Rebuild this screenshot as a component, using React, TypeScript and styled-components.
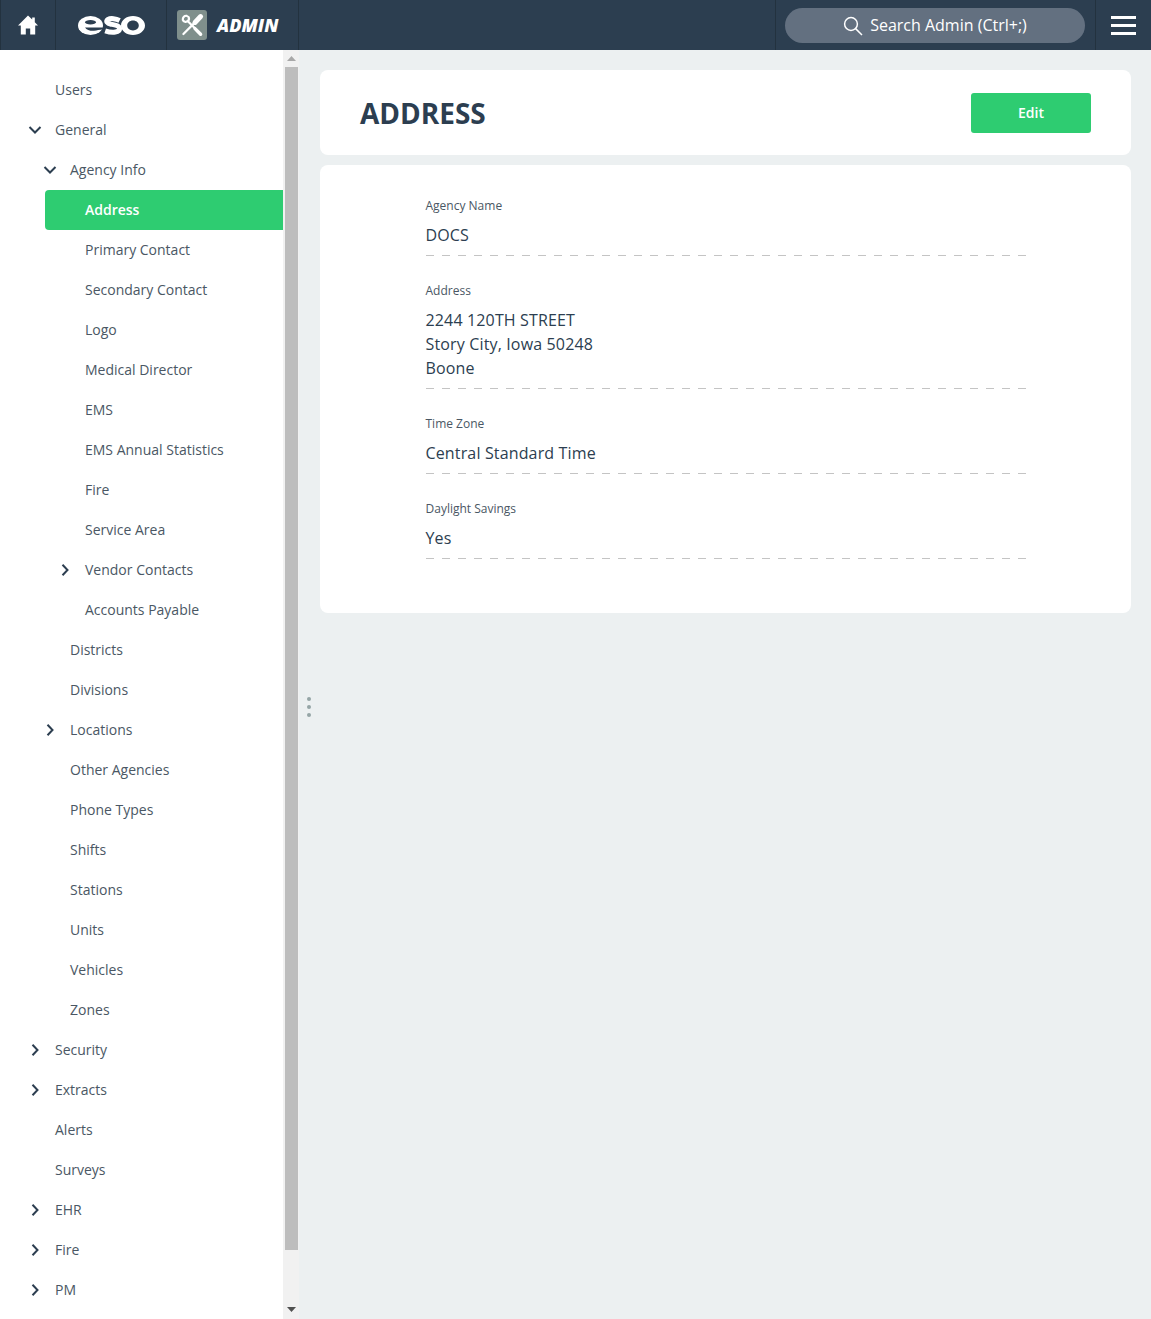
import React from "react";
import styled, { createGlobalStyle } from "styled-components";

const Global = createGlobalStyle`
  html, body { margin: 0; padding: 0; height: 100%; overflow: hidden; }
  body { font-family: "Open Sans", "Liberation Sans", sans-serif; background: #ecf0f1; color: #2c3e50; }
  * { box-sizing: border-box; }
`;

const Page = styled.div`
  width: 1151px;
  height: 1319px;
  display: flex;
  flex-direction: column;
  overflow: hidden;
`;

const TopBar = styled.header`
  height: 50px;
  flex: none;
  display: flex;
  background: #2c3e50;
  color: #fff;
`;

const Cell = styled.div<{ $w?: number; $grow?: boolean }>`
  width: ${(p) => (p.$w ? `${p.$w}px` : "auto")};
  flex: ${(p) => (p.$grow ? "1" : "none")};
  display: flex;
  align-items: center;
  border-left: 1px solid #23323f;
`;

const HomeCell = styled(Cell)`
  justify-content: center;
  padding-right: 1px;
`;

const LogoCell = styled(Cell)`
  justify-content: center;
`;

const AdminCell = styled(Cell)`
  padding-left: 10px;
  gap: 10px;
`;

const Tile = styled.div`
  width: 30px;
  height: 30px;
  border-radius: 3px;
  background: #7f8f8c;
  display: flex;
  align-items: center;
  justify-content: center;
`;

const AdminText = styled.span`
  font-size: 18px;
  font-weight: 800;
  font-style: italic;
  color: #fff;
`;

const SearchCell = styled(Cell)`
  padding: 8px 10px 0 9px;
  align-items: flex-start;
`;

const SearchPill = styled.div`
  width: 300px;
  height: 35px;
  border-radius: 18px;
  background: #637080;
  display: flex;
  align-items: center;
  justify-content: center;
  gap: 7px;
  font-size: 16px;
  color: #fff;
`;

const SearchLabel = styled.span`
  padding-bottom: 2px;
`;

const Burger = styled(Cell)`
  flex-direction: column;
  justify-content: center;
  gap: 5px;
`;

const BurgerBar = styled.span`
  width: 25px;
  height: 3px;
  background: #fff;
`;

const Body = styled.div`
  flex: 1;
  display: flex;
  position: relative;
  min-height: 0;
`;

const Side = styled.nav`
  width: 283px;
  flex: none;
  background: #fff;
  padding-top: 20px;
`;

const Row = styled.div<{ $level: number; $active?: boolean }>`
  height: 40px;
  display: flex;
  align-items: center;
  position: relative;
  margin-left: ${(p) => (p.$active ? 45 : 0)}px;
  padding: 0 0 2px ${(p) => (p.$active ? 40 : 55 + p.$level * 15)}px;
  font-size: 14px;
  font-weight: ${(p) => (p.$active ? 600 : 400)};
  background: ${(p) => (p.$active ? "#2ecc71" : "transparent")};
  color: ${(p) => (p.$active ? "#fff" : "#4a5764")};
  border-radius: ${(p) => (p.$active ? "4px 0 0 4px" : "0")};
`;

const Chevron = styled.svg<{ $level: number }>`
  position: absolute;
  left: ${(p) => 28 + p.$level * 15}px;
  top: 14px;
  width: 14px;
  height: 12px;
  fill: none;
  stroke: #2c3e50;
  stroke-width: 2;
`;

const Track = styled.div`
  width: 16px;
  flex: none;
  background: #f1f1f1;
  display: flex;
  flex-direction: column;
  align-items: center;
`;

const Arrow = styled.svg`
  width: 9px;
  height: 5px;
  flex: none;
`;

const ArrowUp = styled(Arrow)`
  margin: 6px 0 6px;
`;

const ArrowDown = styled(Arrow)`
  margin: 6px 0 7px;
`;

const Thumb = styled.div`
  width: 13px;
  flex: none;
  height: 1183px;
  background: #bdbdbd;
`;

const TrackGap = styled.div`
  flex: 1;
`;

const Main = styled.main`
  flex: 1;
  min-width: 0;
  padding: 20px 20px 0 21px;
  display: flex;
  flex-direction: column;
  gap: 10px;
`;

const Card = styled.section`
  background: #fff;
  border-radius: 8px;
`;

const HeadCard = styled(Card)`
  height: 85px;
  display: flex;
  align-items: center;
  justify-content: space-between;
  padding: 0 40px;
`;

const Title = styled.h1`
  margin: 1px 0 0;
  font-size: 28px;
  font-weight: 700;
  color: #2c3e50;
`;

const EditButton = styled.button`
  width: 120px;
  height: 40px;
  border: 0;
  border-radius: 3px;
  padding: 0 0 2px;
  background: #2ecc71;
  color: #fff;
  font: 600 14px "Open Sans", sans-serif;
  margin-top: 1px;
`;

const FormCard = styled(Card)`
  padding: 30px 105px 54px 105.5px;
`;

const Field = styled.div`
  & + & {
    margin-top: 24px;
  }
`;

const Label = styled.div`
  font-size: 12px;
  line-height: 20px;
  color: #4a5764;
  padding-top: 1px;
  margin-bottom: 7px;
`;

const Value = styled.div`
  font-size: 16px;
  font-weight: 500;
  line-height: 24px;
  letter-spacing: 0.15px;
  color: #2c3e50;
  padding-bottom: 8px;
`;

const Dash = styled.div`
  height: 1px;
  background: repeating-linear-gradient(90deg, #c4c4c4 0 8px, transparent 8px 16px);
`;

const Handle = styled.div`
  position: absolute;
  left: 307px;
  top: 647px;
  display: flex;
  flex-direction: column;
  gap: 4px;
`;

const Dot = styled.span`
  width: 4px;
  height: 4px;
  border-radius: 50%;
  background: #95a5a6;
`;

type Item = { t: string; l: number; c?: "d" | "r"; a?: boolean };

const items: Item[] = [
  { t: "Users", l: 0 },
  { t: "General", l: 0, c: "d" },
  { t: "Agency Info", l: 1, c: "d" },
  { t: "Address", l: 2, a: true },
  { t: "Primary Contact", l: 2 },
  { t: "Secondary Contact", l: 2 },
  { t: "Logo", l: 2 },
  { t: "Medical Director", l: 2 },
  { t: "EMS", l: 2 },
  { t: "EMS Annual Statistics", l: 2 },
  { t: "Fire", l: 2 },
  { t: "Service Area", l: 2 },
  { t: "Vendor Contacts", l: 2, c: "r" },
  { t: "Accounts Payable", l: 2 },
  { t: "Districts", l: 1 },
  { t: "Divisions", l: 1 },
  { t: "Locations", l: 1, c: "r" },
  { t: "Other Agencies", l: 1 },
  { t: "Phone Types", l: 1 },
  { t: "Shifts", l: 1 },
  { t: "Stations", l: 1 },
  { t: "Units", l: 1 },
  { t: "Vehicles", l: 1 },
  { t: "Zones", l: 1 },
  { t: "Security", l: 0, c: "r" },
  { t: "Extracts", l: 0, c: "r" },
  { t: "Alerts", l: 0 },
  { t: "Surveys", l: 0 },
  { t: "EHR", l: 0, c: "r" },
  { t: "Fire", l: 0, c: "r" },
  { t: "PM", l: 0, c: "r" },
];

const fields: { label: string; lines: string[] }[] = [
  { label: "Agency Name", lines: ["DOCS"] },
  { label: "Address", lines: ["2244 120TH STREET", "Story City, Iowa 50248", "Boone"] },
  { label: "Time Zone", lines: ["Central Standard Time"] },
  { label: "Daylight Savings", lines: ["Yes"] },
];

export default function App() {
  return (
    <Page>
      <Global />
      <TopBar>
        <HomeCell $w={55}>
          <svg width="20" height="20" viewBox="0 0 20 20" fill="#fff">
            <path d="M10 0.5 L14.2 4.6 L14.2 2.6 L16.8 2.6 L16.8 7.2 L20 10.4 L17.2 10.4 L17.2 19.5 L12.2 19.5 L12.2 13.5 L7.8 13.5 L7.8 19.5 L2.8 19.5 L2.8 10.4 L0 10.4 Z" />
          </svg>
        </HomeCell>
        <LogoCell $w={111}>
          <svg width="67" height="19" viewBox="0 0 67 19">
            <ellipse cx="12.5" cy="9.5" rx="12.5" ry="9.5" fill="#fff" />
            <ellipse cx="12.5" cy="6.2" rx="5.6" ry="2.2" fill="#2c3e50" />
            <path d="M7 11.4 L25 11.4 L25 13.6 C21 13.8 19 14.6 16 14.8 C12 15 8.5 13.8 7 11.4 Z" fill="#2c3e50" />
            <path d="M41.6 4.4 C38 2.6 32.6 2 30 3.4 C27.4 5 29 7.4 33 8.2 C37 9 41.6 9.6 41.6 12.8 C41.6 16 35 17.4 27.2 14.8" fill="none" stroke="#fff" strokeWidth="5" />
            <path fillRule="evenodd" fill="#fff" d="M55 0 C61.6 0 67 4.2 67 9.5 C67 14.8 61.6 19 55 19 C48.4 19 43 14.8 43 9.5 C43 4.2 48.4 0 55 0 Z M55 4.6 C51.6 4.6 49.2 6.8 49.2 9.5 C49.2 12.2 51.6 14.4 55 14.4 C58.4 14.4 60.8 12.2 60.8 9.5 C60.8 6.8 58.4 4.6 55 4.6 Z" />
          </svg>
        </LogoCell>
        <AdminCell $w={132}>
          <Tile>
            <svg width="30" height="30" viewBox="0 0 30 30" fill="none" stroke="#fff" strokeLinecap="round">
              <path strokeWidth="5" d="M23.6 6.6 L18 12.4" />
              <path strokeWidth="2.2" d="M18 12.4 L6.4 24" />
              <path strokeWidth="2.2" d="M10.6 11 L17.4 17.8" />
              <path strokeWidth="3.4" d="M18 18.6 L23.6 24.2" />
              <path strokeWidth="2.2" d="M9.8 5.8 C7.4 5.4 5.6 7.2 5.8 9.8 C6.6 11.8 9 12.4 10.8 11.2 C12 10 12.2 8 11.4 6.8" />
            </svg>
          </Tile>
          <AdminText>ADMIN</AdminText>
        </AdminCell>
        <Cell $grow />
        <SearchCell $w={320}>
          <SearchPill>
            <svg width="20" height="20" viewBox="0 0 20 20" fill="none" stroke="#fff" strokeWidth="1.5">
              <circle cx="8" cy="8" r="6.4" />
              <path d="M12.6 12.6 L19 19" />
            </svg>
            <SearchLabel>Search Admin (Ctrl+;)</SearchLabel>
          </SearchPill>
        </SearchCell>
        <Burger $w={56}>
          <BurgerBar />
          <BurgerBar />
          <BurgerBar />
        </Burger>
      </TopBar>
      <Body>
        <Side>
          {items.map((it, i) => (
            <Row key={i} $level={it.l} $active={it.a}>
              {it.c && (
                <Chevron $level={it.l} viewBox="0 0 14 12">
                  <path d={it.c === "d" ? "M1.5 3 L7 8.5 L12.5 3" : "M4.5 .8 L9.5 6 L4.5 11.2"} />
                </Chevron>
              )}
              {it.t}
            </Row>
          ))}
        </Side>
        <Track>
          <ArrowUp viewBox="0 0 9 5" fill="#a8a8a8">
            <path d="M4.5 0 L9 5 L0 5 Z" />
          </ArrowUp>
          <Thumb />
          <TrackGap />
          <ArrowDown viewBox="0 0 9 5" fill="#505050">
            <path d="M0 0 L9 0 L4.5 5 Z" />
          </ArrowDown>
        </Track>
        <Main>
          <HeadCard>
            <Title>ADDRESS</Title>
            <EditButton>Edit</EditButton>
          </HeadCard>
          <FormCard>
            {fields.map((f) => (
              <Field key={f.label}>
                <Label>{f.label}</Label>
                <Value>
                  {f.lines.map((line) => (
                    <div key={line}>{line}</div>
                  ))}
                </Value>
                <Dash />
              </Field>
            ))}
          </FormCard>
        </Main>
        <Handle>
          <Dot />
          <Dot />
          <Dot />
        </Handle>
      </Body>
    </Page>
  );
}
